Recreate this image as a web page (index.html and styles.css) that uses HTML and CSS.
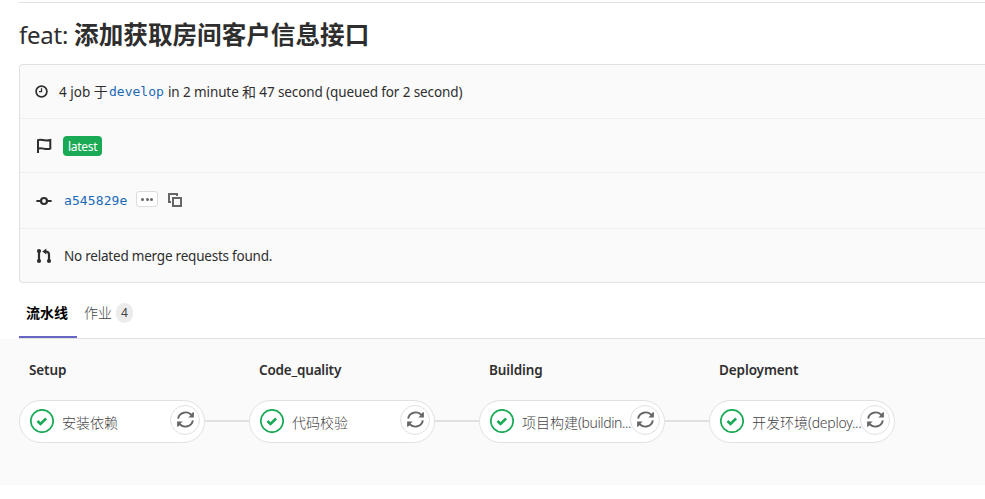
FILE: index.html
```html
<!DOCTYPE html>
<html lang="zh-CN">
<head>
<meta charset="utf-8">
<title>Pipeline</title>
<link rel="stylesheet" href="styles.css">
</head>
<body>
<svg class="defs" width="0" height="0">
  <symbol id="check" viewBox="0 0 24 24"><circle cx="12" cy="12" r="11.2" fill="#fff" stroke="#1aaa55" stroke-width="1.7"/><path d="M7.500 12l3 2.900 5.600-5.300" fill="none" stroke="#1aaa55" stroke-width="2.700"/></symbol>
  <symbol id="retry" viewBox="0 0 16 16"><path d="M1.100 7.200A7 6.700 0 0 1 13.600 4M14.900 8.800A7 6.700 0 0 1 2.400 12" fill="none" stroke="#666" stroke-width="1.800"/><path d="M15.900.9v5.300h-5.300l1.900-1.800 1.500-2.500zM.1 15.100V9.800h5.300l-1.900 1.800L2.200 13.900z" fill="#666"/></symbol>
</svg>
<main>
  <header class="title-wrap"><h1 class="title">feat: <b>添加获取房间客户信息接口</b></h1></header>
  <section class="info">
    <div class="row row-jobs">
      <svg class="clock" width="13" height="13" viewBox="0 0 13 13" fill="none" stroke="#2e2e2e"><circle cx="6.5" cy="6.5" r="5.4" stroke-width="1.7"/><path d="M6.5 3.2v3.5H4" stroke-width="1.3"/></svg>
      <span class="jobs">4 job <span class="cjk">于</span></span><a class="mono branch">develop</a><span class="duration">in 2 minute <span class="cjk">和</span> 47 second (queued for 2 second)</span>
    </div>
    <div class="row">
      <svg class="icon" width="16" height="16" viewBox="0 0 16 16" fill="none" stroke="#2e2e2e" stroke-width="2"><path d="M2 15V2.200c3-1.800 6 1.600 12.300-.2v8.600C9 12.500 6 8.800 2 10.700"/></svg>
      <span class="badge">latest</span>
    </div>
    <div class="row row-commit">
      <svg class="icon" width="16" height="16" viewBox="0 0 16 16" fill="none" stroke="#2e2e2e" stroke-width="2.200" stroke-linecap="round"><circle cx="8" cy="8" r="3"/><path d="M1.200 8h3.800M11 8h3.800"/></svg>
      <a class="mono sha">a545829e</a>
      <span class="more"><i></i><i></i><i></i></span>
      <svg class="copy" width="14" height="14" viewBox="0 0 14 14" fill="none" stroke="#666" stroke-width="2"><path d="M3 9H1V1h8v2"/><path d="M5 5h8v8H5z"/></svg>
    </div>
    <div class="row row-mr">
      <svg class="icon" width="16" height="16" viewBox="0 0 16 16" fill="none" stroke="#2e2e2e" stroke-width="2.200"><path d="M3 3v10M13 13V6.500q0-3-3.500-3"/><path d="M10.300.5v6L6.300 3.500z" fill="#2e2e2e" stroke="none"/><g fill="#2e2e2e" stroke="none"><circle cx="3" cy="3" r="2.100"/><circle cx="3" cy="13" r="2.100"/><circle cx="13" cy="13" r="2.100"/></g></svg>
      <span class="mr">No related merge requests found.</span>
    </div>
  </section>
  <nav class="tabs"><a class="tab active">流水线</a><a class="tab"><span class="thin">作业</span><span class="count">4</span></a></nav>
</main>
<section class="graph">
  <div class="stage"><h2>Setup</h2><div class="job"><svg class="status"><use href="#check"/></svg><span class="name">安装依赖</span><span class="retry"><svg><use href="#retry"/></svg></span></div></div>
  <div class="stage"><h2 class="quality">Code_quality</h2><div class="job"><svg class="status"><use href="#check"/></svg><span class="name">代码校验</span><span class="retry"><svg><use href="#retry"/></svg></span></div></div>
  <div class="stage"><h2>Building</h2><div class="job"><svg class="status"><use href="#check"/></svg><span class="name">项目构建<em class="building">(buildin...</em></span><span class="retry"><svg><use href="#retry"/></svg></span></div></div>
  <div class="stage"><h2>Deployment</h2><div class="job"><svg class="status"><use href="#check"/></svg><span class="name">开发环境<em>(deploy...</em></span><span class="retry"><svg><use href="#retry"/></svg></span></div></div>
</section>
</body>
</html>
```
FILE: styles.css
```css
* { box-sizing: border-box; }
body { margin: 0; height: 499px; overflow: hidden; background: #fff; color: #2e2e2e; font: 14px/20px "Noto Sans", "Noto Sans CJK SC", sans-serif; }
.defs { display: block; }
main { padding: 2px 0 0 19px; }
.title-wrap { border-top: 1px solid #e1e1e1; height: 62px; display: flex; align-items: center; }
.title { margin: 2px 0 0; font-size: 24px; line-height: 32px; font-weight: 400; letter-spacing: -.25px; white-space: nowrap; }
.title b { font-weight: 700; font-size: 24.600px; letter-spacing: 0; }
.info { height: 219px; border: 1px solid #e1e1e1; border-right: 0; border-radius: 4px 0 0 4px; background: #fafafa; }
.row { height: 54px; padding-left: 16px; display: flex; align-items: center; border-bottom: 1px solid #eee; white-space: nowrap; }
.row-commit { height: 56px; }
.row-mr { height: 53px; border-bottom: 0; }
.row-jobs { padding-left: 15px; }
.clock { margin-right: 11px; }
.icon { margin-right: 11px; }
.jobs { width: 50px; }
.cjk { font-size: 14px; }
.thin { font-weight: 300; }
.mono { color: #1b69b6; font-family: "DejaVu Sans Mono", monospace; font-size: 13px; }
.branch { width: 59px; }
.duration, .jobs, .mr { font-size: 13.500px; }
.duration { letter-spacing: -.11px; }
.mr { letter-spacing: -.22px; margin-left: 1px; }
.badge { height: 20px; padding: 0 5px; border-radius: 4px; background: #1aaa55; color: #fff; font-size: 12px; line-height: 21px; width: 39px; letter-spacing: -.3px; }
.sha { width: 72px; margin-left: 1px; letter-spacing: .1px; }
.more { width: 22px; height: 16px; border: 1px solid #dcdcdc; border-radius: 3px; background: #fff; display: flex; align-items: center; justify-content: center; gap: 1.500px; margin-top: -3px; }
.more i { width: 3px; height: 3px; border-radius: 50%; background: #666; }
.copy { margin: -2px 0 0 10px; }
.tabs { height: 56px; display: flex; border-bottom: 1px solid #e1e1e1; }
.tab { height: 55px; padding: 4px 7px 0; display: flex; align-items: center; color: #444; }
.active { width: 58px; border-bottom: 2px solid #6666c4; color: #000; font-weight: 700; padding-top: 6px; }
.count { margin-left: 4px; width: 17px; height: 20px; border-radius: 10px; background: #ececec; font-size: 12px; line-height: 20px; text-align: center; }
.graph { height: 146px; background: #fafafa; padding: 20px 0 0 19px; display: flex; }
.stage { width: 230px; flex: none; }
.stage h2 { margin: 0 0 19px 10px; height: 22px; font-size: 13.500px; line-height: 22px; font-weight: 600; letter-spacing: -.1px; white-space: nowrap; }
.stage .quality { letter-spacing: -.2px; }
.job { position: relative; width: 186px; height: 43px; border: 1px solid #e1e1e1; border-radius: 22px; background: #fff; display: flex; align-items: center; padding-left: 10px; }
.stage:not(:last-child) .job::after { content: ""; position: absolute; left: 185px; top: 19px; width: 44px; height: 2px; background: #e1e1e1; }
.status { width: 24px; height: 24px; overflow: visible; margin-top: -1px; }
.name { margin-left: 8px; width: 106px; color: #444; font-weight: 300; white-space: nowrap; margin-top: 3px; }
.name em { font-style: normal; letter-spacing: -.25px; }
.name .building { letter-spacing: -.4px; }
.retry { width: 30px; height: 30px; margin: -3px 0 0 2px; border: 1px solid #e1e1e1; border-radius: 50%; background: #fff; display: flex; padding: 5px 0 0 6px; }
.retry svg { width: 17px; height: 17px; }
```
